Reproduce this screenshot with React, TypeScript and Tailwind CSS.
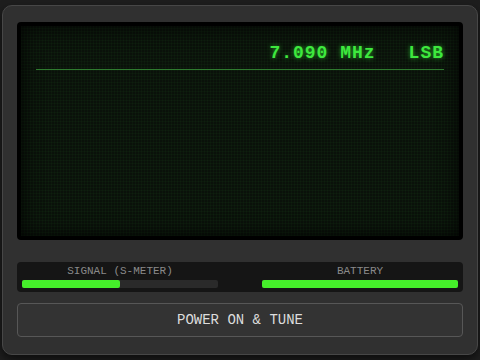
export default function App() {
  return (
    <div className="h-[360px] w-[480px] bg-[#1e1e1e] pl-[2px] pt-[5px] font-['Courier_New','Nimbus_Mono_PS','FreeMono',Courier,'Liberation_Mono',monospace]">
      <div className="flex h-[350px] w-[476px] flex-col rounded-[10px] border border-[#474747] bg-[#303030] px-[14px] pt-[16px] shadow-[0_4px_10px_rgba(0,0,0,0.6)]">
        {/* screen */}
        <div className="h-[218px] rounded-[4px] border-[4px] border-black bg-[#0a110a] bg-[repeating-linear-gradient(0deg,rgba(40,120,40,0.07)_0px,rgba(40,120,40,0.07)_1px,transparent_1px,transparent_3px),repeating-linear-gradient(90deg,rgba(40,120,40,0.07)_0px,rgba(40,120,40,0.07)_1px,transparent_1px,transparent_3px)] px-[15px] pt-[15px] shadow-[inset_0_0_20px_rgba(0,0,0,0.8)]">
          <div className="flex justify-end gap-[33px] border-b border-[#2f7a2f] pb-[4px] text-[18px] font-bold leading-[24px] tracking-[1px] text-[#3ee83e] [text-shadow:0_0_5px_rgba(60,255,60,0.6)]">
            <span>7.090 MHz</span>
            <span>LSB</span>
          </div>
        </div>

        {/* meters */}
        <div className="mt-[22px] grid h-[30px] grid-cols-2 gap-[44px] rounded-[4px] bg-[#151515] px-[5px] pt-[3px]">
          <div className="flex flex-col items-center">
            <p className="text-[11px] leading-[13px] text-[#8a8a8a]">SIGNAL (S-METER)</p>
            <div className="mt-[2px] h-[8px] w-full rounded-[2px] bg-[#2a2a2a]">
              <div className="h-full w-1/2 rounded-[2px] bg-[#45ee2a]" />
            </div>
          </div>
          <div className="flex flex-col items-center">
            <p className="text-[11px] leading-[13px] text-[#8a8a8a]">BATTERY</p>
            <div className="mt-[2px] h-[8px] w-full rounded-[2px] bg-[#2a2a2a]">
              <div className="h-full w-full rounded-[2px] bg-[#45ee2a]" />
            </div>
          </div>
        </div>

        {/* button */}
        <button className="mt-[11px] h-[34px] w-full rounded-[4px] border border-[#575757] bg-[#333333] text-[14px] text-[#dddddd]">
          POWER ON &amp; TUNE
        </button>
      </div>
    </div>
  );
}
